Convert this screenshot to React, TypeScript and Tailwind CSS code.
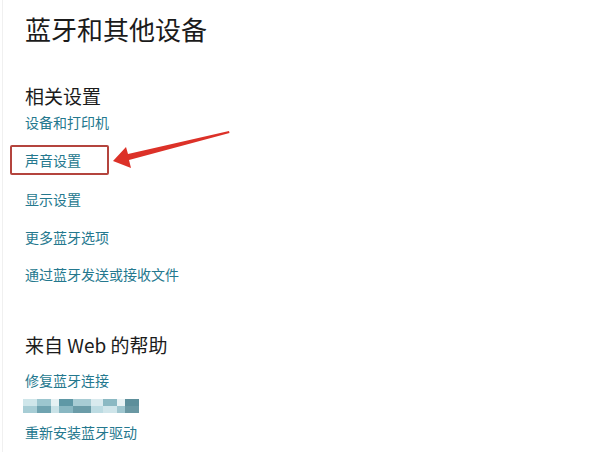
import React from 'react';

const linkCls = 'h-[26px] flex items-center text-[14px] text-[#24788e]';

export default function App() {
  const related = ['设备和打印机'];

  return (
    <div
      className="relative w-[589px] h-[452px] bg-white overflow-hidden"
      style={{ fontFamily: '"Noto Sans CJK SC", "Noto Sans", sans-serif' }}
    >
      <div className="ml-[2px] h-full border-l border-[#f0f0f0] pl-[22px] flex flex-col">
        {/* Page title */}
        <h1 className="mt-[12px] h-[34px] flex items-center text-[26px] text-[#1b1b1b] font-normal leading-none">
          蓝牙和其他设备
        </h1>

        {/* Related settings */}
        <h2 className="mt-[36px] h-[27px] flex items-center text-[19px] text-[#1b1b1b] font-normal leading-none">
          相关设置
        </h2>
        {related.map((t) => (
          <a key={t} className={linkCls}>{t}</a>
        ))}
        <div className="h-[50px] flex items-center">
          <a className="-ml-[15px] w-[99px] h-[30px] pl-[13px] flex items-center border-2 border-[#b4443d] rounded-[2px] text-[14px] text-[#24788e]">
            声音设置
          </a>
        </div>
        <a className={`${linkCls} mt-[1px]`}>显示设置</a>
        <a className={`${linkCls} mt-[12px]`}>更多蓝牙选项</a>
        <a className={`${linkCls} mt-[11px]`}>通过蓝牙发送或接收文件</a>

        {/* Help from web */}
        <h2 className="mt-[44px] h-[27px] flex items-center text-[19px] text-[#1b1b1b] font-normal leading-none">
          来自 Web 的帮助
        </h2>
        <a className={`${linkCls} mt-[9px]`}>修复蓝牙连接</a>
        {/* pixelated (blurred) link */}
        <div className="mt-[6px] -ml-[2px] w-[116px] h-[14px] flex flex-col">
          <div className="flex h-1/2">
            <div className="w-[14px] bg-[#cfe6ea]" />
            <div className="w-[14px] bg-[#9cc6cf]" />
            <div className="w-[8px] bg-[#e6f1f3]" />
            <div className="w-[14px] bg-[#5f98a6]" />
            <div className="w-[18px] bg-[#a8ccd4]" />
            <div className="w-[12px] bg-[#d9eaee]" />
            <div className="w-[14px] bg-[#8bb9c3]" />
            <div className="w-[8px] bg-[#e8f2f4]" />
            <div className="w-[14px] bg-[#5d8f9b]" />
          </div>
          <div className="flex h-1/2">
            <div className="w-[14px] bg-[#a7cdd5]" />
            <div className="w-[14px] bg-[#6fa3b0]" />
            <div className="w-[8px] bg-[#c9e2e7]" />
            <div className="w-[14px] bg-[#89b7c2]" />
            <div className="w-[18px] bg-[#6b9ca8]" />
            <div className="w-[12px] bg-[#bcdbe2]" />
            <div className="w-[14px] bg-[#cfe5ea]" />
            <div className="w-[8px] bg-[#9fc6cf]" />
            <div className="w-[14px] bg-[#6a98a3]" />
          </div>
        </div>
        <a className={`${linkCls} mt-[6px]`}>重新安装蓝牙驱动</a>
      </div>

      {/* Red annotation arrow */}
      <svg className="absolute left-0 top-0" width="589" height="452" viewBox="0 0 589 452">
        <polygon
          points="113,161 126,147 128,154 229,131 229.5,133 129,160 131,168"
          fill="#dc3128"
        />
      </svg>
    </div>
  );
}
